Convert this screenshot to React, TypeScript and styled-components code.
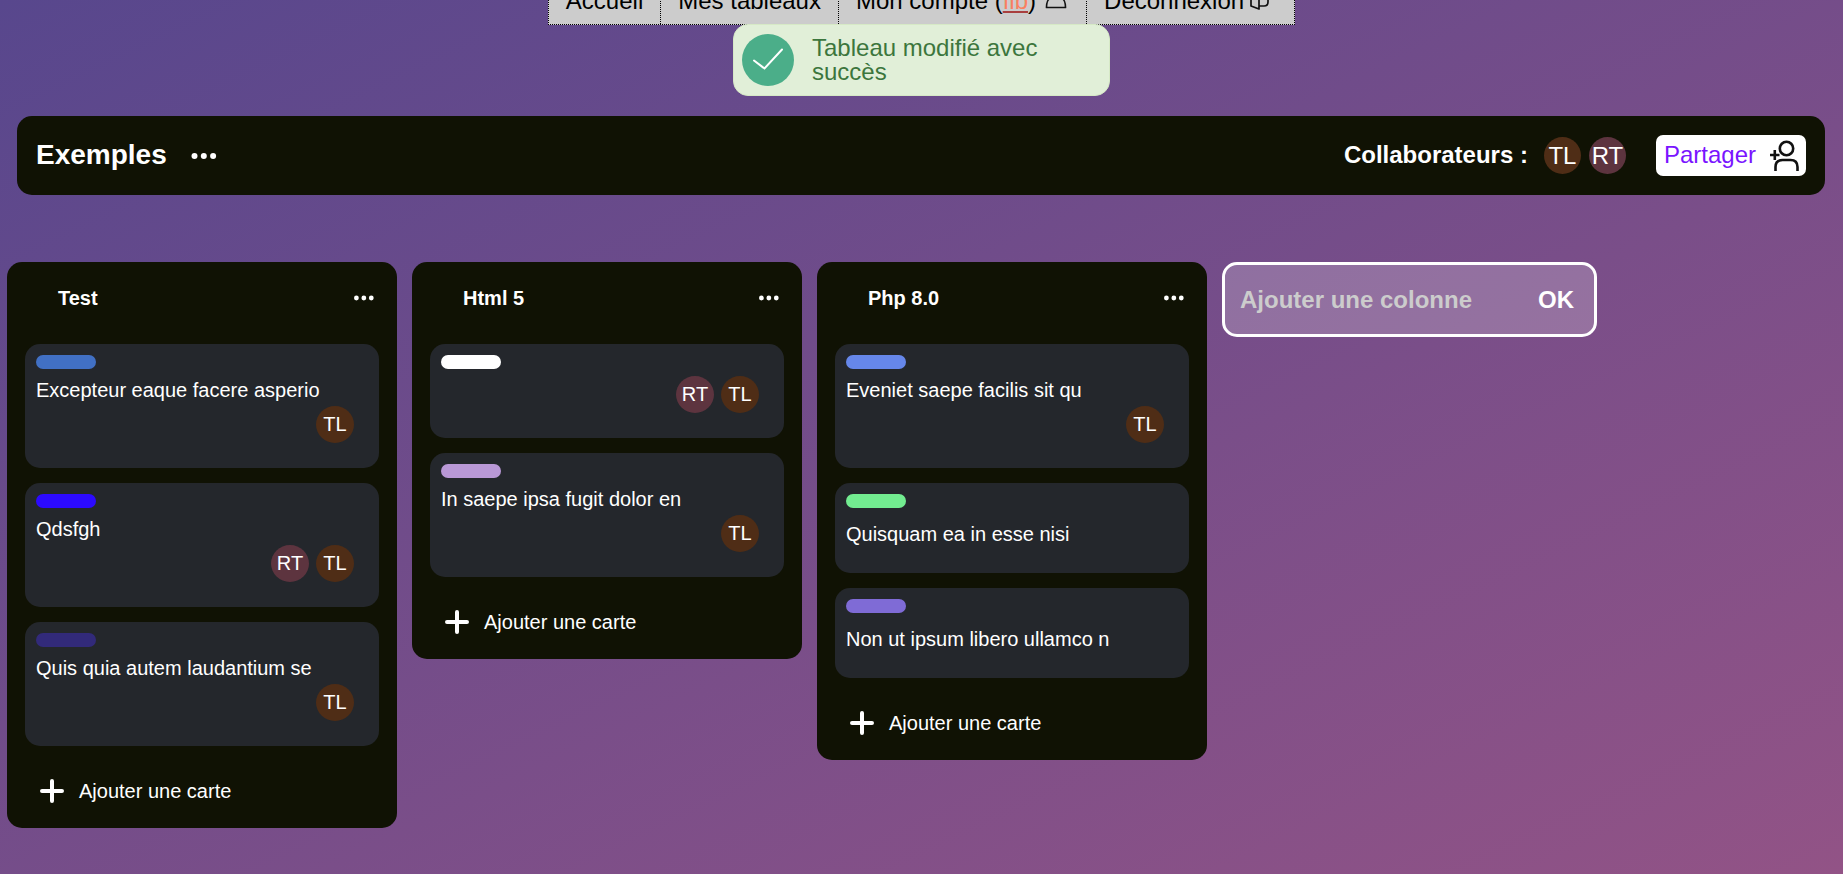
import React from "react";
import styled, { createGlobalStyle } from "styled-components";

const GlobalStyle = createGlobalStyle`
  * { box-sizing: border-box; }
  html, body { margin: 0; padding: 0; }
  body {
    font-family: "Liberation Sans", Arial, sans-serif;
    font-size: 24px;
    line-height: 28px;
    color: #fff;
  }
  button, input { font: inherit; color: inherit; margin: 0; border: 0; background: none; }
  button { cursor: pointer; padding: 0; }
  ul, h1, h2, h3, p { margin: 0; padding: 0; }
  ul { list-style: none; }
`;

const Page = styled.div`
  display: flex;
  flex-direction: column;
  min-height: 100vh;
  overflow: hidden;
  background: linear-gradient(to bottom right, #58478d, #925386);
`;

const Nav = styled.nav`
  display: flex;
  justify-content: center;
  margin-top: -23px;
`;

const NavList = styled.ul`
  display: flex;
  background: #ccc;
  border: 1px dotted #000;
`;

const NavItem = styled.li`
  display: flex;
  align-items: center;
  gap: 6px;
  padding: 9px 17px 9px;
  color: #000;
  & + & { border-left: 1px dotted #000; }
`;

const NavLink = styled.a`
  color: #000;
  text-decoration: none;
`;

const UserName = styled.span`
  color: #fa8060;
  text-decoration: underline;
  text-decoration-color: #a93f3f;
`;

const NavIcon = styled.svg`
  width: 27px;
  height: 27px;
  fill: none;
  stroke: #111;
  stroke-width: 1.7;
  stroke-linejoin: round;
`;

const Flash = styled.div`
  align-self: center;
  position: relative;
  display: flex;
  align-items: center;
  gap: 18px;
  width: 377px;
  max-width: 100%;
  min-height: 72px;
  margin-top: -1px;
  padding: 8px;
  border: 1px solid #d6e9c6;
  border-radius: 15px;
  background: #e1efd8;
  color: #3c763d;
  line-height: 24px;
`;

const FlashIcon = styled.svg`
  flex: none;
  width: 52px;
  height: 52px;
`;

const BoardBar = styled.header`
  display: flex;
  align-items: center;
  justify-content: space-between;
  min-height: 79px;
  margin: 20px 18px 0 17px;
  padding: 0 19px;
  border-radius: 15px;
  background: #101204;
`;

const BarGroup = styled.div`
  display: flex;
  align-items: center;
`;

const BoardTitle = styled.h1`
  padding-bottom: 2px;
  font-size: 28px;
  line-height: 32px;
`;

const MembersLabel = styled.strong`
  padding-bottom: 2px;
`;

const MenuButton = styled.button<{ $size: number }>`
  display: flex;
  svg { width: ${(p) => p.$size}px; height: ${(p) => p.$size}px; fill: #fff; }
`;

const BoardMenu = styled(MenuButton)`
  margin-left: 22px;
`;

const Members = styled.div`
  display: flex;
  gap: 8px;
  margin: 0 30px 0 16px;
`;

const Badge = styled.span<{ $color: string; $large?: boolean }>`
  display: flex;
  align-items: center;
  justify-content: center;
  width: ${(p) => (p.$large ? 37 : 38)}px;
  height: 37px;
  padding-bottom: ${(p) => (p.$large ? 0 : 1)}px;
  border-radius: 50%;
  background: ${(p) => p.$color};
  font-size: ${(p) => (p.$large ? 24 : 20)}px;
`;

const ShareButton = styled.button`
  display: flex;
  align-items: center;
  gap: 12px;
  height: 41px;
  padding: 0 6px 0 8px;
  border-radius: 7px;
  background: #fff;
  color: #7a14ff;
  span { padding-bottom: 2px; }
  svg {
    width: 32px;
    height: 32px;
    fill: none;
    stroke: #111;
    stroke-width: 2.6;
  }
`;

const Columns = styled.main`
  display: flex;
  align-items: flex-start;
  gap: 15px;
  margin-top: 67px;
  padding: 0 7px 45px;
`;

const Column = styled.section`
  flex: 0 0 390px;
  padding: 0 18px 7px;
  border-radius: 15px;
  background: #101204;
`;

const ColumnHead = styled.div`
  display: flex;
  align-items: center;
  justify-content: space-between;
  height: 82px;
  padding: 0 3px 10px 33px;
`;

const ColumnTitle = styled.h2`
  font-size: 20px;
  line-height: 24px;
`;

const CardList = styled.ul`
  display: flex;
  flex-direction: column;
  gap: 15px;
`;

const Card = styled.li`
  padding: 11px 25px 0 11px;
  border-radius: 15px;
  background: #24272c;
`;

const Label = styled.div<{ $color: string }>`
  width: 60px;
  height: 14px;
  margin-bottom: 7px;
  border-radius: 7px;
  background: ${(p) => p.$color};
`;

const CardTitle = styled.h3<{ $alone: boolean }>`
  padding-bottom: ${(p) => (p.$alone ? 20 : 2)}px;
  font-size: 20px;
  font-weight: 400;
  line-height: ${(p) => (p.$alone ? 38 : 28)}px;
`;

const CardMembers = styled.div`
  display: flex;
  justify-content: flex-end;
  gap: 7px;
  padding-bottom: 25px;
`;

const AddCard = styled.button`
  display: flex;
  align-items: center;
  gap: 15px;
  height: 60px;
  margin-top: 15px;
  padding: 0 15px;
  font-size: 20px;
  svg {
    width: 24px;
    height: 24px;
    stroke: #fff;
    stroke-width: 4;
    stroke-linecap: round;
  }
`;

const AddColumn = styled.form`
  display: flex;
  align-items: center;
  flex: 0 1 375px;
  min-width: 0;
  height: 75px;
  padding: 0 20px 0 15px;
  border: 3px solid #fff;
  border-radius: 15px;
  background: rgba(255, 255, 255, 0.2);
  font-weight: 700;
`;

const ColumnInput = styled.input`
  flex: 1;
  width: 100%;
  min-width: 0;
  height: 28px;
  padding: 0;
  outline: none;
  &::placeholder { color: #ccc; opacity: 1; }
`;

const Dots = () => (
  <svg viewBox="0 0 30 30" aria-hidden="true">
    <circle cx="5.500" cy="15" r="3" />
    <circle cx="14.800" cy="15" r="3" />
    <circle cx="24.100" cy="15" r="3" />
  </svg>
);

const memberColors: Record<string, string> = { TL: "#4f2d16", RT: "#5d343f" };

type CardData = { color: string; title?: string; members: string[] };

const columns: { title: string; cards: CardData[] }[] = [
  {
    title: "Test",
    cards: [
      { color: "#4170c4", title: "Excepteur eaque facere asperio", members: ["TL"] },
      { color: "#2c0aff", title: "Qdsfgh", members: ["RT", "TL"] },
      { color: "#322a7a", title: "Quis quia autem laudantium se", members: ["TL"] },
    ],
  },
  {
    title: "Html 5",
    cards: [
      { color: "#ffffff", members: ["RT", "TL"] },
      { color: "#b998d6", title: "In saepe ipsa fugit dolor en", members: ["TL"] },
    ],
  },
  {
    title: "Php 8.0",
    cards: [
      { color: "#6687ea", title: "Eveniet saepe facilis sit qu", members: ["TL"] },
      { color: "#72ec90", title: "Quisquam ea in esse nisi", members: [] },
      { color: "#7f6bd6", title: "Non ut ipsum libero ullamco n", members: [] },
    ],
  },
];

export default function App() {
  return (
    <>
      <GlobalStyle />
      <Page>
        <Nav>
          <NavList>
            <NavItem><NavLink href="#accueil">Accueil</NavLink></NavItem>
            <NavItem><NavLink href="#tableaux">Mes tableaux</NavLink></NavItem>
            <NavItem>
              <NavLink href="#compte">Mon compte (<UserName>fib</UserName>)</NavLink>
              <NavIcon viewBox="0 0 27 27" aria-hidden="true">
                <circle cx="14" cy="4.500" r="4" />
                <path d="M4.500 19.500C4.500 15 6 10.500 9 10.500h10c3 0 4.500 4.500 4.500 9z" />
              </NavIcon>
            </NavItem>
            <NavItem>
              <NavLink href="#deconnexion">Déconnexion</NavLink>
              <NavIcon viewBox="0 0 27 27" aria-hidden="true">
                <path d="M1 3v15l8 3V6.500zM1 3h13q4 0 4 4v7q0 4-4 4H9" />
              </NavIcon>
            </NavItem>
          </NavList>
        </Nav>

        <Flash role="status">
          <FlashIcon viewBox="0 0 52 52" aria-hidden="true">
            <circle cx="26" cy="26" r="26" fill="#4bae89" />
            <path d="M12 26.500 22.500 34.500 40 15.500" fill="none" stroke="#fff" strokeWidth="2" strokeLinecap="round" />
          </FlashIcon>
          <p>Tableau modifié avec succès</p>
        </Flash>

        <BoardBar>
          <BarGroup>
            <BoardTitle>Exemples</BoardTitle>
            <BoardMenu $size={30} type="button" aria-label="Options du tableau"><Dots /></BoardMenu>
          </BarGroup>
          <BarGroup>
            <MembersLabel>Collaborateurs :</MembersLabel>
            <Members>
              {["TL", "RT"].map((m) => (
                <Badge key={m} $large $color={memberColors[m]}>{m}</Badge>
              ))}
            </Members>
            <ShareButton type="button">
              <span>Partager</span>
              <svg viewBox="0 0 32 32" aria-hidden="true">
                <circle cx="18.500" cy="8.500" r="6.700" />
                <path d="M7.500 31v-4q0-7 7-7h8q7 0 7 7v4M2 15h9.500M6.800 10v10" />
              </svg>
            </ShareButton>
          </BarGroup>
        </BoardBar>

        <Columns>
          {columns.map((col) => (
            <Column key={col.title}>
              <ColumnHead>
                <ColumnTitle>{col.title}</ColumnTitle>
                <MenuButton $size={24} type="button" aria-label={`Options de ${col.title}`}><Dots /></MenuButton>
              </ColumnHead>
              <CardList>
                {col.cards.map((card) => (
                  <Card key={card.color}>
                    <Label $color={card.color} />
                    {card.title && <CardTitle $alone={card.members.length === 0}>{card.title}</CardTitle>}
                    {card.members.length > 0 && (
                      <CardMembers>
                        {card.members.map((m) => (
                          <Badge key={m} $color={memberColors[m]}>{m}</Badge>
                        ))}
                      </CardMembers>
                    )}
                  </Card>
                ))}
              </CardList>
              <AddCard type="button">
                <svg viewBox="0 0 24 24" aria-hidden="true"><path d="M12 2v20M2 12h20" /></svg>
                Ajouter une carte
              </AddCard>
            </Column>
          ))}
          <AddColumn onSubmit={(e) => e.preventDefault()}>
            <ColumnInput type="text" aria-label="Ajouter une colonne" placeholder="Ajouter une colonne" />
            <button type="submit">OK</button>
          </AddColumn>
        </Columns>
      </Page>
    </>
  );
}
